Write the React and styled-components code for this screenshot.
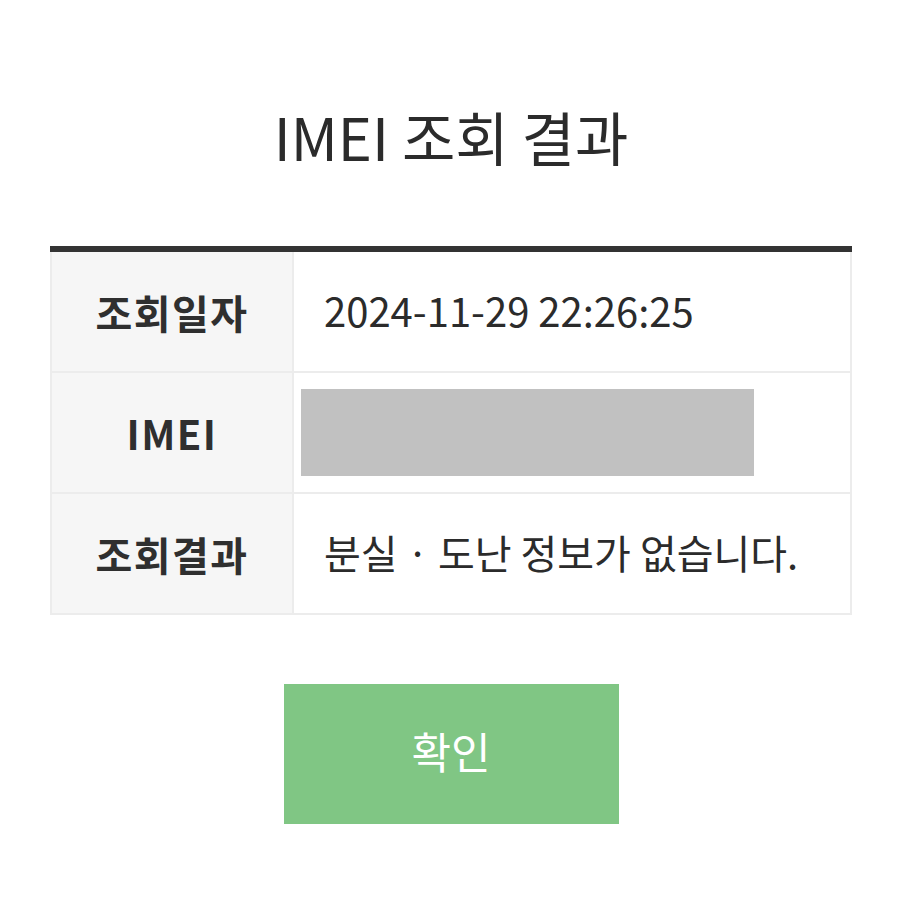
import React from "react";
import styled, { createGlobalStyle } from "styled-components";

const Global = createGlobalStyle`
  html, body { margin: 0; padding: 0; background: #ffffff; }
  body { font-family: "Noto Sans CJK KR", "Noto Sans", sans-serif; color: #2b2b2b; }
`;

const Page = styled.div`
  width: 902px;
  height: 902px;
  display: flex;
  flex-direction: column;
  align-items: center;
  padding-top: 96px;
  box-sizing: border-box;
`;

const Title = styled.h1`
  margin: 0;
  font-size: 58px;
  font-weight: 400;
  line-height: 80px;
  color: #2b2b2b;
`;

const Table = styled.div`
  margin-top: 70px;
  width: 802px;
  display: grid;
  grid-template-columns: 240px 1fr;
  gap: 2px;
  padding: 0 2px 2px 2px;
  box-sizing: border-box;
  background: #ececec;
  border-top: 6px solid #333333;
`;

const Label = styled.div`
  height: 119px;
  display: flex;
  align-items: center;
  justify-content: center;
  background: #f6f6f6;
  font-size: 40px;
  font-weight: 700;
  color: #2f2f2f;
  letter-spacing: 1.5px;
`;

const Value = styled.div`
  height: 119px;
  display: flex;
  align-items: center;
  padding-left: ${(p) => (p.$tight ? "7px" : "30px")};
  padding-bottom: ${(p) => (p.$tight ? "0" : "3px")};
  box-sizing: border-box;
  background: #ffffff;
  font-size: 40px;
  color: #2b2b2b;
`;

const Masked = styled.div`
  width: 453px;
  height: 87px;
  background: #c1c1c1;
`;

const Button = styled.button`
  margin-top: 69px;
  width: 335px;
  height: 140px;
  padding: 0 0 8px 0;
  border: none;
  background: #80c684;
  color: #ffffff;
  font-family: "Noto Sans CJK KR", "Noto Sans", sans-serif;
  font-size: 43px;
  font-weight: 400;
  cursor: pointer;
`;

export default function App() {
  return (
    <>
      <Global />
      <Page>
        <Title>IMEI 조회 결과</Title>
        <Table>
          <Label>조회일자</Label>
          <Value>2024-11-29 22:26:25</Value>
          <Label>IMEI</Label>
          <Value $tight>
            <Masked />
          </Value>
          <Label>조회결과</Label>
          <Value>분실 · 도난 정보가 없습니다.</Value>
        </Table>
        <Button>확인</Button>
      </Page>
    </>
  );
}
